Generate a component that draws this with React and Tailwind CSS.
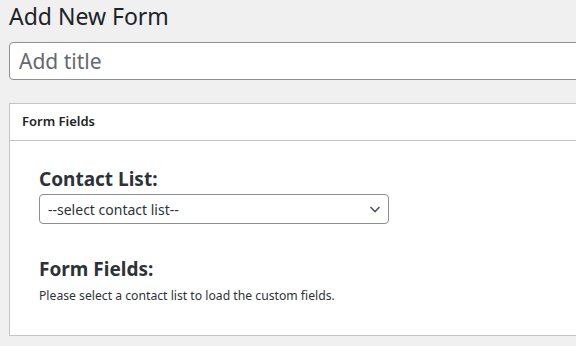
export default function App() {
  return (
    <div
      className="min-h-[346px] w-[576px] overflow-hidden bg-[#f0f0f1] pl-[9px] text-[#1d2327]"
      style={{ fontFamily: '"Noto Sans", "Open Sans", sans-serif' }}
    >
      <h1 className="pt-[1px] text-[23px] leading-[30px] font-normal">Add New Form</h1>

      <div className="mt-[11px] w-[620px]">
        <input
          type="text"
          placeholder="Add title"
          className="h-[38px] w-full rounded-[4px] border border-[#8c8f94] bg-white px-[9px] text-[21px] text-[#1d2327] placeholder:text-[#646970] outline-none"
        />
      </div>

      <div className="mt-[23px] w-[620px] border border-[#c3c4c7] bg-white">
        <div className="flex h-[37px] items-center border-b border-[#c3c4c7] px-[12px]">
          <h2 className="text-[13px] font-semibold">Form Fields</h2>
        </div>

        <div className="px-[29px] pt-[25px] pb-[31px]">
          <h3 className="text-[19px] leading-[26px] font-bold text-[#2c3338]">Contact List:</h3>
          <div className="relative mt-[2px] w-[350px]">
            <select className="h-[30px] w-full appearance-none rounded-[4px] border border-[#8c8f94] bg-white pl-[8px] pr-[24px] text-[14px] text-[#2c3338] outline-none">
              <option>--select contact list--</option>
            </select>
            <svg
              className="pointer-events-none absolute top-[10px] right-[8px]"
              width="12"
              height="10"
              viewBox="0 0 12 10"
              fill="none"
              stroke="#50575e"
              strokeWidth="1.6"
            >
              <path d="M1.5 3l4.5 4.5L10.5 3" />
            </svg>
          </div>

          <h3 className="mt-[32px] text-[19px] leading-[26px] font-bold text-[#2c3338]">Form Fields:</h3>
          <p className="mt-[6px] text-[12.2px] leading-[16px] text-[#2c3338]">
            Please select a contact list to load the custom fields.
          </p>
        </div>
      </div>
    </div>
  );
}
